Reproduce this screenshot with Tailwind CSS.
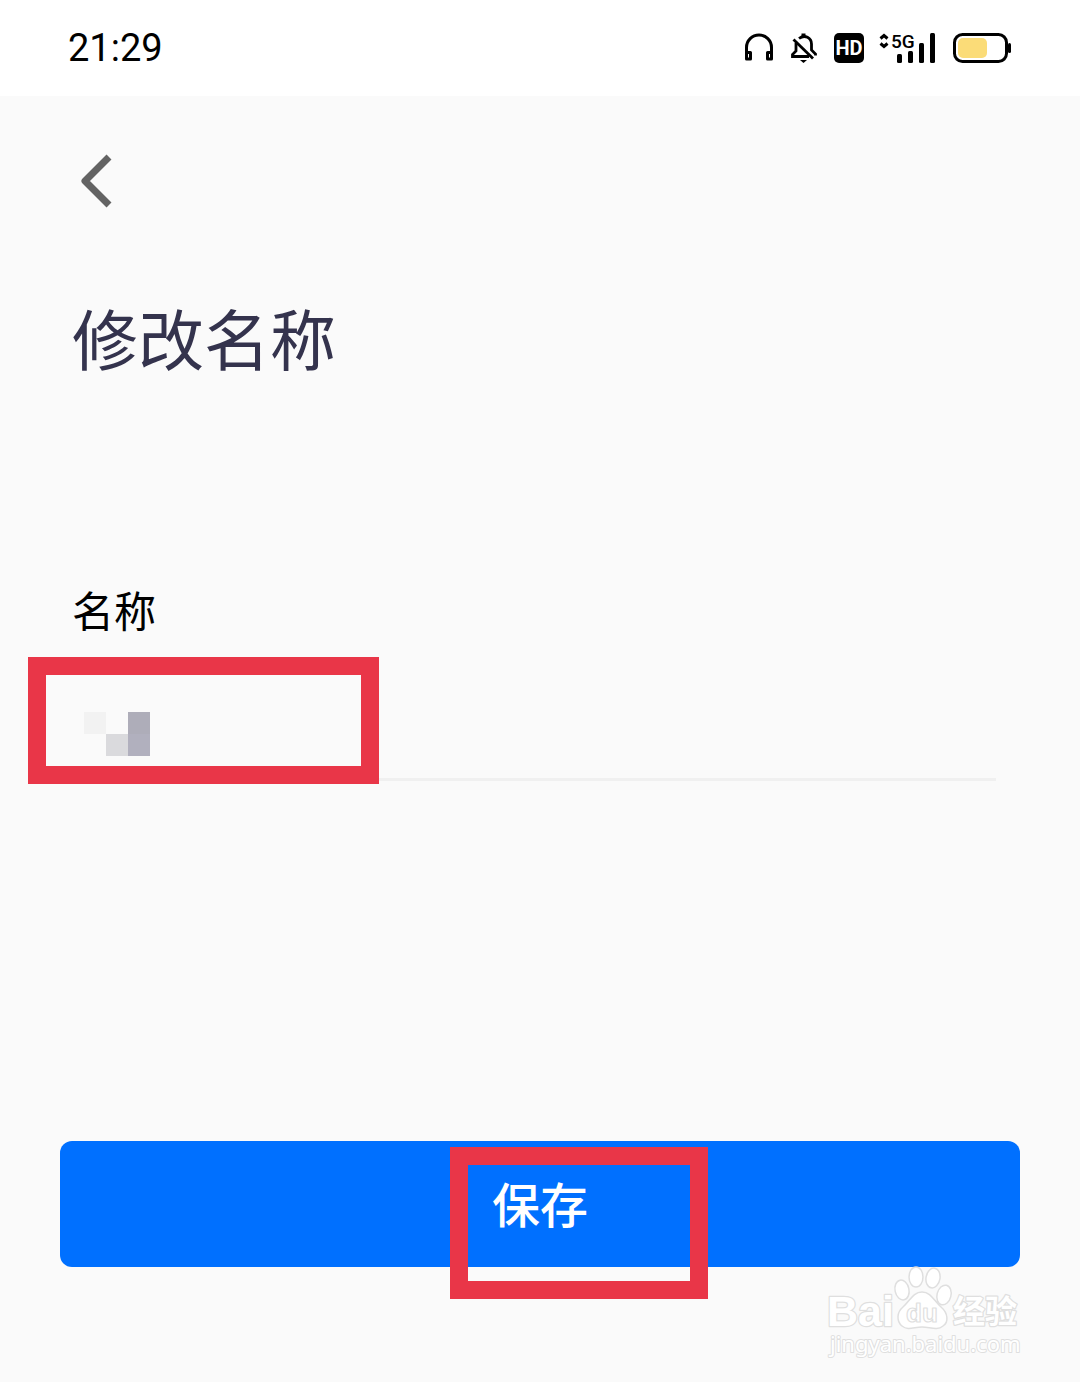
<!DOCTYPE html>
<html lang="zh-CN">
<head>
    <meta charset="UTF-8">
    <meta name="viewport" content="width=device-width, initial-scale=1.0">
    <title>修改名称</title>
    <script src="https://cdn.jsdelivr.net/npm/@tailwindcss/browser@4"></script>
</head>

<body class="flex flex-col min-h-screen bg-[#fafafa] font-['Noto_Sans_CJK_SC',sans-serif] text-black">
    <!-- Status bar -->
    <header class="flex items-center justify-between h-24 px-[68px] bg-white">
        <time class="text-[38px] leading-none font-['Roboto',sans-serif]">21:29</time>
        <div class="flex items-center">
            <svg class="w-[30px] h-[30px] mr-4" viewBox="0 0 30 30" fill="none" stroke="#000" stroke-width="3" aria-hidden="true">
                <path d="M2.500 20V14.500a12.500 12.500 0 0 1 25 0V20"/>
                <path d="M2.500 19.500H6.500V26H2.500ZM23.500 19.500H27.500V26H23.500Z" stroke-linejoin="round"/>
            </svg>
            <svg class="w-7 h-[30px] mr-4" viewBox="0 0 28 30" fill="none" stroke="#000" stroke-width="2.800" aria-hidden="true">
                <path d="M6 10V18L2.500 21.500V23.500H19M9 5.500C15 1 21.500 5 21.500 11V17L25.500 21V22.500"/>
                <path d="M3.500 6.500L23 25.500"/>
                <path d="M13.500 0.500V4" stroke-width="4"/>
                <path d="M10 27H17L13.500 30Z" fill="#000" stroke="none"/>
            </svg>
            <span class="flex items-center justify-center w-[30px] h-[30px] mr-4 rounded-[5px] bg-black text-white text-[20px] leading-none font-bold font-['Roboto',sans-serif]">HD</span>
            <svg class="w-[56px] h-[32px] mr-4 overflow-visible" viewBox="0 0 56 32" aria-hidden="true">
                <path d="M0.500 6.500L4 3.500L7.500 6.500M0.500 11.500L4 14.500L7.500 11.500" fill="none" stroke="#000" stroke-width="3"/>
                <text x="11" y="16" font-family="Roboto, sans-serif" font-size="19" font-weight="500">5G</text>
                <rect x="17" y="22" width="5" height="9" rx="1.500"/>
                <rect x="28" y="19" width="5" height="12" rx="1.500"/>
                <rect x="39" y="11" width="5" height="20" rx="1.500"/>
                <rect x="50" y="1" width="5" height="30" rx="1.500"/>
            </svg>
            <svg class="w-[60px] h-[30px]" viewBox="0 0 60 30" aria-hidden="true">
                <rect x="2.500" y="1.500" width="52" height="27" rx="8" fill="#fff" stroke="#000" stroke-width="3"/>
                <rect x="6" y="5" width="29" height="20" rx="5" fill="#fbdc78"/>
                <rect x="56" y="10" width="3" height="10" rx="1.500"/>
            </svg>
        </div>
    </header>

    <main class="flex flex-col px-[60px] pt-14">
        <button type="button" aria-label="返回" class="self-start px-5 cursor-pointer">
            <svg class="w-8 h-14" viewBox="0 0 32 56" fill="none" stroke="#636363" stroke-width="7" aria-hidden="true">
                <path d="M29 5L5 29L29 53" stroke-linejoin="round"/>
            </svg>
        </button>

        <h1 class="mt-20 px-3 text-[66px] leading-[96px] text-[#34334d]">修改名称</h1>

        <form class="flex flex-col mt-[195px]">
            <label for="name" class="px-3 text-[42px] leading-[60px]">名称</label>
            <div class="relative mt-5 mr-6">
                <input type="text" id="name" class="w-full h-[122px] px-6 text-[42px] bg-transparent border-b-3 border-[#f0f0f0] outline-none">
                <!-- Masked value -->
                <div class="absolute left-6 top-[53px] grid grid-cols-3 w-[66px] h-11" aria-hidden="true">
                    <span class="bg-[#f2f2f2]"></span>
                    <span></span>
                    <span class="bg-[#aeadb9]"></span>
                    <span></span>
                    <span class="bg-[#dadadd]"></span>
                    <span class="bg-[#b1b0be]"></span>
                </div>
                <div class="absolute -left-8 -top-[2px] w-[351px] h-[127px] border-18 border-[#e93648] pointer-events-none"></div>
            </div>

            <div class="relative mt-[360px]">
                <button type="submit" class="block w-full h-[126px] pb-1 rounded-xl bg-[#0070ff] text-white text-[48px] font-medium cursor-pointer">保存</button>
                <div class="absolute left-1/2 top-[6px] w-[258px] h-[152px] -ml-[90px] border-18 border-[#e93648] pointer-events-none"></div>
            </div>
        </form>
    </main>

    <!-- Watermark -->
    <svg class="absolute right-[54px] top-[1262px] w-[204px] h-[100px]" viewBox="0 0 204 100" fill="#fff" stroke="#dfdfdf" stroke-width="1.500" stroke-linejoin="round" aria-label="Baidu 经验">
        <g font-weight="700" stroke-width="2.500" paint-order="stroke">
            <text x="5" y="64" font-size="43" font-family="Liberation Sans, sans-serif">Bai</text>
            <text x="131" y="61" font-size="32" font-family="Noto Sans CJK SC, sans-serif">经验</text>
        </g>
        <ellipse cx="80" cy="28" rx="7" ry="10" transform="rotate(-12 80 28)"/>
        <ellipse cx="94" cy="15" rx="7" ry="10"/>
        <ellipse cx="111" cy="16" rx="7" ry="10" transform="rotate(10 111 16)"/>
        <ellipse cx="122" cy="33" rx="7" ry="10" transform="rotate(14 122 33)"/>
        <path d="M100 30C109 30 112 39 119 45C126 51 127 60 121 64C115 69 108 65 100 65C92 65 86 69 80 64C74 59 75 50 81 45C88 39 91 30 100 30Z"/>
        <text x="84" y="60" font-size="26" font-weight="700" stroke-width="1.200" font-family="Liberation Sans, sans-serif">du</text>
        <text x="8" y="90" font-size="22" stroke-width="2" paint-order="stroke" font-family="Noto Sans, sans-serif">jingyan.baidu.com</text>
    </svg>
</body>
</html>
